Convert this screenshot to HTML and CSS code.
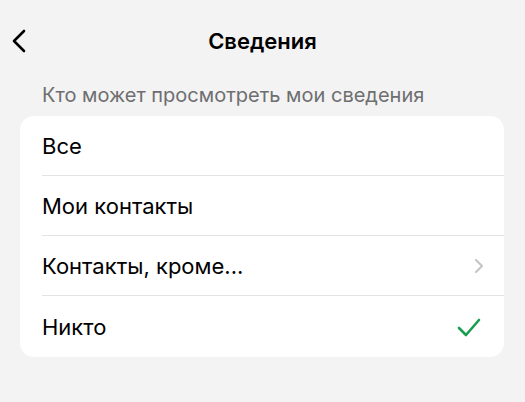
FILE: index.html
```html
<!DOCTYPE html>
<html lang="ru">
<head>
<meta charset="utf-8">
<link rel="stylesheet" href="styles.css">
</head>
<body>
<div class="screen">
  <header class="nav">
    <span class="back">
      <svg width="16" height="24" viewBox="0 0 16 24"><path d="M13 2 L3 12 L13 22" fill="none" stroke="#000" stroke-width="2.6" stroke-linecap="round" stroke-linejoin="round"/></svg>
    </span>
    <h1 class="title">Сведения</h1>
  </header>
  <div class="caption">Кто может просмотреть мои сведения</div>
  <ul class="card">
    <li class="row"><span>Все</span></li>
    <li class="row"><span>Мои контакты</span></li>
    <li class="row"><span>Контакты, кроме...</span>
      <svg class="chev" width="10" height="16" viewBox="0 0 10 16"><path d="M2 2 L8 8 L2 14" fill="none" stroke="#c4c4c6" stroke-width="2" stroke-linecap="round" stroke-linejoin="round"/></svg>
    </li>
    <li class="row"><span>Никто</span>
      <svg class="check" width="24" height="20" viewBox="0 0 24 20"><path d="M2 10 L9 17 L22 2" fill="none" stroke="#1a9d4f" stroke-width="2.6" stroke-linecap="round" stroke-linejoin="round"/></svg>
    </li>
  </ul>
</div>
</body>
</html>
```
FILE: styles.css
```css
* { box-sizing: border-box; }
html, body { margin: 0; padding: 0; }
body {
  background: #f3f3f3;
  font-family: "Inter", "Roboto", "Liberation Sans", sans-serif;
  color: #000;
  width: 525px;
  height: 402px;
  overflow: hidden;
}
.screen { padding: 0 20px 0 20px; }
.nav {
  position: relative;
  height: 84px;
  display: flex;
  align-items: center;
  justify-content: center;
  padding-bottom: 2px;
}
.back {
  position: absolute;
  left: -9px;
  top: 29px;
  display: flex;
}
.title {
  margin: 0;
  font-size: 22px;
  font-weight: 600;
  padding-left: 0;
}
.caption {
  color: #6e6e70;
  font-size: 20px;
  padding-left: 22px;
  height: 32px;
  line-height: 22px;
}
.card {
  list-style: none;
  margin: 0;
  padding: 0 0 0 22px;
  background: #fff;
  border-radius: 14px;
  width: 484px;
}
.row {
  height: 60px;
  display: flex;
  align-items: center;
  justify-content: space-between;
  font-size: 22px;
  border-bottom: 1px solid #e3e3e5;
  padding-right: 22px;
}
.row:last-child { border-bottom: none; height: 61px; }
.chev { margin-right: -2px; }
.check { margin-right: 1px; margin-top: 2px; }
```
